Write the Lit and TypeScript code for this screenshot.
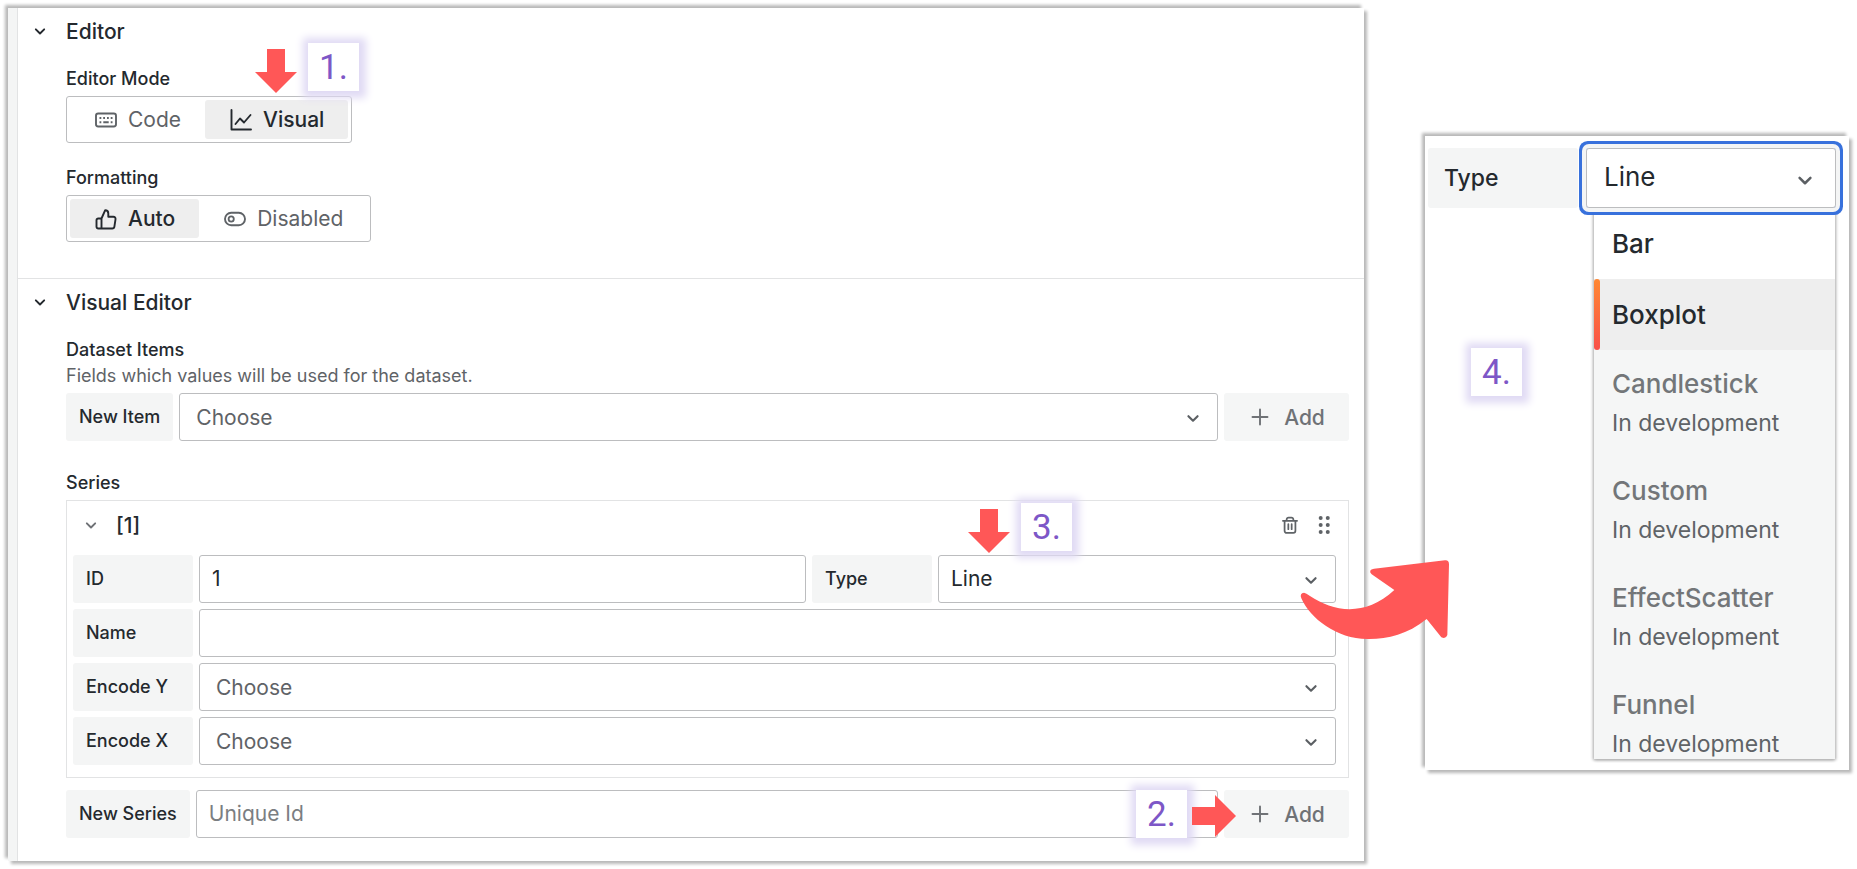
import { LitElement, html, css, svg, nothing } from "lit";
import { customElement, property } from "lit/decorators.js";
import { classMap } from "lit/directives/class-map.js";

const line = (d: string) =>
  svg`<path d=${d} fill="none" stroke="currentColor" stroke-width="2.3" stroke-linecap="round" stroke-linejoin="round"></path>`;

const glyphs: Record<string, unknown> = {
  chevron: line("M7 10l5 5 5-5"),
  keyboard: svg`
    <rect x="2" y="5.5" width="20" height="13" rx="2.2" fill="none" stroke="currentColor" stroke-width="1.9"></rect>
    <path d="M5.5 10h1.800M9.200 10h1.800M13 10h1.800M16.700 10h1.800M5.500 14.300h1.800M9.300 14.300h5.400M16.700 14.300h1.800" stroke="currentColor" stroke-width="1.9" fill="none"></path>`,
  chart: svg`<path d="M2.500 2v19.500h19.500M6.500 16l4.500-5.500 4 4L21.500 7" fill="none" stroke="currentColor" stroke-width="1.9" stroke-linecap="round" stroke-linejoin="round"></path>`,
  thumb: svg`<path d="M7.500 21.500H4.200a1.700 1.700 0 0 1-1.700-1.700v-6.600a1.700 1.700 0 0 1 1.700-1.700h3.300zM7.500 11.500l3.600-8.200c1.700 0 3.200 1.300 3.200 3.100v3.300h5a2.200 2.200 0 0 1 2.200 2.600l-1.100 7.300a2.200 2.200 0 0 1-2.200 1.900H7.500" fill="none" stroke="currentColor" stroke-width="1.9" stroke-linejoin="round"></path>`,
  toggle: svg`
    <rect x="2" y="5.8" width="20" height="12.4" rx="6.2" fill="none" stroke="currentColor" stroke-width="1.9"></rect>
    <circle cx="8.2" cy="12" r="2.6" fill="none" stroke="currentColor" stroke-width="1.8"></circle>`,
  plus: svg`<path d="M12 4.500v15M4.500 12h15" stroke="currentColor" stroke-width="1.9" stroke-linecap="round" fill="none"></path>`,
  trash: svg`<path d="M3.500 7h17M8 7V5.200A2.200 2.200 0 0 1 10.200 3h3.600A2.200 2.200 0 0 1 16 5.200V7M5.500 7v12a2.500 2.500 0 0 0 2.500 2.500h8A2.500 2.500 0 0 0 18.500 19V7M10 11v6M14 11v6" fill="none" stroke="currentColor" stroke-width="2.1" stroke-linecap="round" stroke-linejoin="round"></path>`,
  grip: svg`${[3.5, 12, 20.5].map((y) => svg`<circle cx="8" cy=${y} r="2.4" fill="currentColor"></circle><circle cx="16.5" cy=${y} r="2.4" fill="currentColor"></circle>`)}`,
};

const icon = (name: string, cls = "") =>
  html`<svg class="icon ${cls}" viewBox="0 0 24 24" aria-hidden="true">${glyphs[name]}</svg>`;

const base = css`
  * { box-sizing: border-box; }
  :host { font-family: Inter, sans-serif; color: #24292e; }
  .icon { display: block; flex: none; width: 24px; height: 24px; }
  button, input, select { font: inherit; color: inherit; margin: 0; }
`;

@customElement("step-mark")
class StepMark extends LitElement {
  @property() step = "";
  static styles = css`
    :host {
      display: block;
      width: 51px;
      height: 48px;
      padding-left: 11px;
      background: #fff;
      box-shadow: 1px 1px 8px 6px #e0daf4;
      color: #7d57c7;
      font: 35px/50px Roboto, sans-serif;
      box-sizing: border-box;
    }
  `;
  render() {
    return html`${this.step}.`;
  }
}

@customElement("point-arrow")
class PointArrow extends LitElement {
  @property() direction = "down";
  static styles = css`
    :host { display: block; line-height: 0; }
    svg { fill: #ff5757; }
  `;
  render() {
    return this.direction === "down"
      ? html`<svg width="42" height="44" viewBox="0 0 42 44"><path d="M12 0h18v23h12L21 44 0 23h12z"></path></svg>`
      : html`<svg width="44" height="42" viewBox="0 0 44 42"><path d="M0 12v18h23v12l21-21L23 0v12z"></path></svg>`;
  }
}

@customElement("choice-group")
class ChoiceGroup extends LitElement {
  @property() name = "";
  @property() value = "";
  @property({ attribute: false }) options: { label: string; icon: string }[] = [];
  static styles = [
    base,
    css`
      :host { display: inline-flex; }
      .group {
        display: flex;
        height: 47px;
        padding: 3px;
        border: 1px solid #bcbdbf;
        border-radius: 3px;
      }
      .option {
        position: relative;
        display: flex;
        align-items: center;
        gap: 10px;
        padding: 0 24px;
        border-radius: 3px;
        font-size: 21px;
        color: #5f6367;
        cursor: pointer;
      }
      .option.on { background: #eee; color: #24292e; font-weight: 500; }
      .radio { position: absolute; inset: 0; opacity: 0; cursor: pointer; }
    `,
  ];
  render() {
    return html`<div class="group" role="radiogroup" aria-label=${this.name}>
      ${this.options.map(
        (o) => html`<label class=${classMap({ option: true, on: o.label === this.value })}>
          <input class="radio" type="radio" name=${this.name} .checked=${o.label === this.value}
            @change=${() => (this.value = o.label)} />
          ${icon(o.icon)}<span>${o.label}</span>
        </label>`,
      )}
    </div>`;
  }
}

@customElement("app-root")
class AppRoot extends LitElement {
  static styles = [
    base,
    css`
      :host { display: block; background: #fff; }
      .page {
        display: grid;
        grid-template-columns: minmax(0, 1fr) 424px;
        gap: 61px;
        align-items: start;
        padding: 8px;
      }
      .panel {
        background: #fff;
        box-shadow: -3px -3px 3px #b8b8b8, 3px 3px 3px #b8b8b8;
      }
      .editor { border-left: 9px solid #f4f5f5; }
      .section { padding: 0 15px 36px 48px; border-left: 1px solid #e2e3e4; }
      .section + .section { border-top: 1px solid #e2e3e4; padding-bottom: 23px; }
      .heading {
        display: flex;
        align-items: center;
        gap: 18px;
        height: 46px;
        margin: 0 0 12px -34px;
        padding: 0;
        border: 0;
        background: none;
        font-size: 21px;
        font-weight: 500;
      }
      .chev { width: 20px; height: 20px; margin: 0 -2px; }
      .caption { margin-bottom: 4px; font-size: 18px; line-height: 26px; font-weight: 500; }
      .caption.tight { margin-bottom: 0; }
      .note { margin: 0 0 4px; font-size: 18px; line-height: 26px; color: #5f6367; }
      .block { position: relative; width: fit-content; }
      .block + .block { margin-top: 22px; }
      .block choice-group { display: flex; }
      .row { display: flex; gap: 6px; }
      .tag {
        display: flex;
        align-items: center;
        flex: none;
        height: 48px;
        padding: 0 13px 1px;
        border-radius: 3px;
        background: #f4f5f5;
        font-size: 18px;
        font-weight: 500;
      }
      .fields .tag { width: 120px; }
      .grow { flex: 1; min-width: 0; }
      .control {
        display: block;
        width: 100%;
        height: 48px;
        padding: 0 12px 1px;
        border: 1px solid #bcbdbf;
        border-radius: 3px;
        background: #fff;
        appearance: none;
        font-size: 21px;
        outline: none;
      }
      .control::placeholder { color: #7b7e82; opacity: 1; }
      .control.empty { padding: 0 16px; color: #5f6367; }
      .pick { position: relative; }
      .pick > .icon {
        position: absolute;
        right: 14px;
        top: 14px;
        width: 22px;
        height: 22px;
        color: #5b5f63;
        pointer-events: none;
      }
      .add {
        display: flex;
        align-items: center;
        justify-content: center;
        gap: 12px;
        width: 125px;
        height: 48px;
        padding: 0;
        border: 0;
        border-radius: 3px;
        background: #f5f6f6;
        color: #6f7276;
        font-size: 21px;
        font-weight: 500;
      }
      .series { margin-bottom: 12px; border: 1px solid #e2e3e4; }
      .series-head { display: flex; align-items: center; height: 48px; padding: 0 14px 0 16px; gap: 14px; }
      .toggle {
        display: flex;
        align-items: center;
        gap: 17px;
        margin-right: auto;
        padding: 0;
        border: 0;
        background: none;
        font-size: 21px;
        font-weight: 500;
      }
      .toggle .icon { color: #6f7276; }
      .action { padding: 0; border: 0; background: none; color: #5f6367; }
      .action .icon { width: 20px; height: 20px; }
      .fields { display: grid; gap: 6px; padding: 6px 12px 12px 6px; }
      .type { width: 398px; }
      .series-caption { margin: 29px 0 4px; }
      .anchor { position: relative; }
      .over { position: absolute; z-index: 2; }
      .a1 { left: 189px; top: -17px; }
      .s1 { left: 242px; top: -23px; }
      .a3 { left: 30px; top: -46px; }
      .s3 { left: 83px; top: -52px; }
      .a2 { left: -32px; top: 5px; }
      .s2 { left: -88px; top: 0; }
      .s4 { left: 46px; top: 212px; }
      .sweep { left: -145px; top: 404px; fill: #ff5757; }

      .detail { position: relative; margin-top: 128px; padding: 12px 13px 11px 3px; }
      .detail-row { display: flex; gap: 8px; }
      .detail .tag { width: 150px; height: 60px; padding: 0 16px; font-size: 23px; }
      .detail .pick {
        z-index: 1;
        border-radius: 3px;
        box-shadow: 0 0 0 4px #f4f5f5, 0 0 0 7px #3871dc;
      }
      .detail .control { height: 60px; padding: 0 17px 3px; font-size: 26px; }
      .detail .pick > .icon { right: 18px; top: 19px; width: 26px; height: 26px; }
      .menu {
        height: 551px;
        margin: 0 1px 0 166px;
        overflow: hidden;
        box-shadow: -1px 1px 3px #b0b0b0, 1px 1px 3px #b0b0b0;
      }
      .item {
        position: relative;
        display: block;
        width: 100%;
        height: 71px;
        padding: 16px 18px;
        border: 0;
        background: #fff;
        text-align: left;
        font-size: 26px;
        line-height: 36px;
        font-weight: 500;
      }
      .item.active { background: #eee; }
      .item.active::before {
        content: "";
        position: absolute;
        inset: 0 auto 0 0;
        width: 6px;
        border-radius: 3px;
        background: linear-gradient(#ff8833, #f95049);
      }
      .item:disabled { height: 107px; background: #f5f6f6; color: #737679; }
      .hint { display: block; margin-top: 3px; font-size: 23px; font-weight: 400; color: #5f6367; }
    `,
  ];

  private select(id: string, value: string, cls = "") {
    return html`<div class="pick ${cls || "grow"}">
      <select class=${classMap({ control: true, empty: value === "Choose" })} id=${id}>
        <option>${value}</option>
      </select>
      ${icon("chevron")}
    </div>`;
  }

  private add() {
    return html`<button class="add">${icon("plus")}<span>Add</span></button>`;
  }

  private heading(text: string) {
    return html`<button class="heading">${icon("chevron", "chev")}<span>${text}</span></button>`;
  }

  private item(name: string, ready: boolean, active = false) {
    return html`<button class=${classMap({ item: true, active })} role="option" aria-selected=${active} ?disabled=${!ready}>
      ${name}${ready ? nothing : html`<span class="hint">In development</span>`}
    </button>`;
  }

  render() {
    return html`<main class="page">
      <div class="panel editor">
        <section class="section">
          ${this.heading("Editor")}
          <div class="block">
            <div class="caption">Editor Mode</div>
            <choice-group name="Editor Mode" value="Visual"
              .options=${[{ label: "Code", icon: "keyboard" }, { label: "Visual", icon: "chart" }]}></choice-group>
            <point-arrow class="over a1"></point-arrow>
            <step-mark class="over s1" step="1"></step-mark>
          </div>
          <div class="block">
            <div class="caption">Formatting</div>
            <choice-group name="Formatting" value="Auto"
              .options=${[{ label: "Auto", icon: "thumb" }, { label: "Disabled", icon: "toggle" }]}></choice-group>
          </div>
        </section>
        <section class="section">
          ${this.heading("Visual Editor")}
          <div class="caption tight">Dataset Items</div>
          <p class="note">Fields which values will be used for the dataset.</p>
          <div class="row">
            <label class="tag" for="new-item">New Item</label>
            ${this.select("new-item", "Choose")} ${this.add()}
          </div>
          <div class="caption series-caption">Series</div>
          <div class="series">
            <div class="series-head">
              <button class="toggle">${icon("chevron", "chev")}<span>[1]</span></button>
              <button class="action" aria-label="Remove">${icon("trash")}</button>
              <button class="action" aria-label="Reorder">${icon("grip")}</button>
            </div>
            <div class="fields">
              <div class="row">
                <label class="tag" for="sid">ID</label>
                <div class="grow"><input class="control" id="sid" value="1" /></div>
                <label class="tag" for="stype">Type</label>
                <div class="anchor type">
                  ${this.select("stype", "Line")}
                  <point-arrow class="over a3"></point-arrow>
                  <step-mark class="over s3" step="3"></step-mark>
                </div>
              </div>
              <div class="row">
                <label class="tag" for="sname">Name</label>
                <div class="grow"><input class="control" id="sname" /></div>
              </div>
              <div class="row">
                <label class="tag" for="ency">Encode Y</label>
                ${this.select("ency", "Choose")}
              </div>
              <div class="row">
                <label class="tag" for="encx">Encode X</label>
                ${this.select("encx", "Choose")}
              </div>
            </div>
          </div>
          <div class="row">
            <label class="tag" for="new-series">New Series</label>
            <div class="grow"><input class="control" id="new-series" placeholder="Unique Id" /></div>
            <div class="anchor">
              ${this.add()}
              <step-mark class="over s2" step="2"></step-mark>
              <point-arrow class="over a2" direction="right"></point-arrow>
            </div>
          </div>
        </section>
      </div>
      <aside class="panel detail">
        <div class="detail-row">
          <label class="tag" for="dtype">Type</label>
          ${this.select("dtype", "Line")}
        </div>
        <div class="menu" role="listbox" aria-label="Type">
          ${this.item("Bar", true)} ${this.item("Boxplot", true, true)}
          ${["Candlestick", "Custom", "EffectScatter", "Funnel"].map((n) => this.item(n, false))}
        </div>
        <step-mark class="over s4" step="4"></step-mark>
        <svg class="over sweep" width="190" height="120" viewBox="0 0 570 360" aria-hidden="true">
          <path d="M64 175Q58 160 72 158 78 159 90 168C160 215 255 232 343 150L275 103Q263 90 282 86L495 61Q507 60 507 73L502 285Q497 299 484 292L440 237C380 285 320 298 262 297 170 297 90 235 64 175z"></path>
        </svg>
      </aside>
    </main>`;
  }
}
